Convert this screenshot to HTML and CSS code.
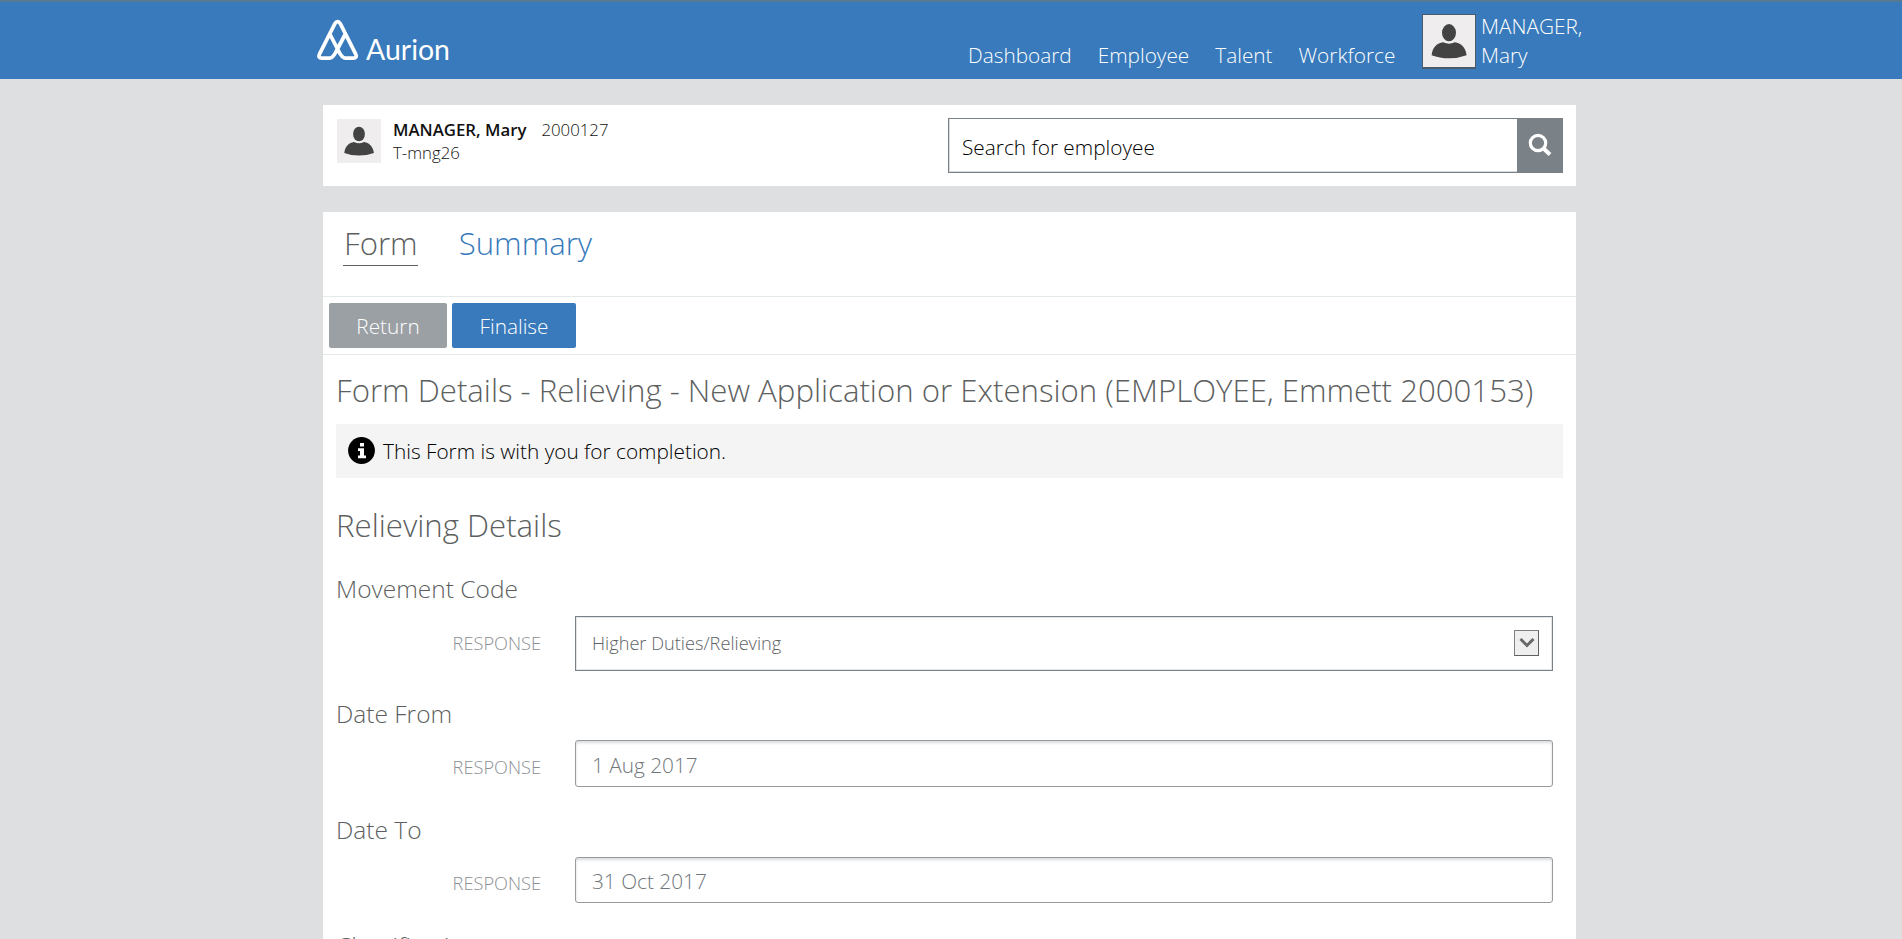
FILE: index.html
```html
<!DOCTYPE html>
<html lang="en">
<head>
<meta charset="utf-8">
<title>Aurion</title>
<link rel="stylesheet" href="styles.css">
</head>
<body>
<header class="topbar">
  <svg class="logo" width="140" height="60" viewBox="0 0 140 60">
    <g fill="none" stroke="#fff" stroke-width="3.800" stroke-linejoin="round" stroke-linecap="round">
      <path d="M14.600 19.500 L22.600 35 Q26 42.200 29.500 42.200 H37 Q41.700 42.200 39.600 37.800 L24.500 8 Q21.600 3.400 18.700 8 L3.600 37.800 Q1.600 42.200 6 42.200 H13.500 Q17 42.200 20.400 35 L28.600 19.500"/>
    </g>
    <text class="logo-text" x="50" y="44" textLength="84" lengthAdjust="spacingAndGlyphs">Aurion</text>
  </svg>
  <nav class="nav">
    <a>Dashboard</a><a>Employee</a><a>Talent</a><a>Workforce</a>
  </nav>
  <div class="user">
    <svg class="user-pic" width="52" height="53" viewBox="0 0 44 44" preserveAspectRatio="none"><rect width="44" height="44" fill="#efedee"/><ellipse cx="22" cy="15" rx="5.900" ry="7.300" fill="#434343"/><path d="M7.300 34 C8 27 12 23.800 17 23 Q22 25.500 27 23 C32 23.800 36 27 36.900 34 Q30 36.600 22 36.600 Q14 36.600 7.300 34Z" fill="#434343"/></svg>
    <span class="user-name">MANAGER,<br>Mary</span>
  </div>
</header>
<main class="page">
  <section class="card person">
    <svg class="person-pic" width="44" height="44" viewBox="0 0 44 44"><rect width="44" height="44" fill="#efedee"/><ellipse cx="22" cy="15" rx="5.900" ry="7.300" fill="#434343"/><path d="M7.300 34 C8 27 12 23.800 17 23 Q22 25.500 27 23 C32 23.800 36 27 36.900 34 Q30 36.600 22 36.600 Q14 36.600 7.300 34Z" fill="#434343"/></svg>
    <div class="person-text"><div><b>MANAGER, Mary</b><span class="person-id">2000127</span></div><div>T-mng26</div></div>
    <div class="search">
      <span class="search-field">Search for employee</span>
      <span class="search-button"><svg width="24" height="24" viewBox="0 0 24 24" fill="none" stroke="#fff"><circle cx="10" cy="10" r="7.700" stroke-width="3.200"/><path d="M15.500 15.500 L22 21.500" stroke-width="4"/></svg></span>
    </div>
  </section>
  <section class="card form">
    <div class="tabs"><span class="tab tab-active">Form</span><span class="tab">Summary</span></div>
    <div class="actions"><span class="button button-return">Return</span><span class="button button-finalise">Finalise</span></div>
    <div class="content">
      <h1 class="title">Form Details - Relieving - New Application or Extension (EMPLOYEE, Emmett 2000153)</h1>
      <div class="notice"><svg width="27" height="27" viewBox="0 0 27 27"><circle cx="13.500" cy="13.500" r="13.400"/><path fill="#fff" d="M12 6h4v3.500h-4zM10 11.200h6v7.300h2v2.800h-8v-2.800h2v-4.500h-2z"/></svg><span>This Form is with you for completion.</span></div>
      <h2 class="section-title">Relieving Details</h2>
      <h3 class="label">Movement Code</h3>
      <div class="row row-select"><span class="response">RESPONSE</span><div class="select"><span>Higher Duties/Relieving</span><span class="arrow"><svg width="16" height="12" viewBox="0 0 16 12"><path d="M1.500 1 L8 7.500 L14.500 1" fill="none" stroke="#686868" stroke-width="3"/></svg></span></div></div>
      <h3 class="label label-from">Date From</h3>
      <div class="row row-from"><span class="response">RESPONSE</span><div class="input">1 Aug 2017</div></div>
      <h3 class="label">Date To</h3>
      <div class="row row-to"><span class="response">RESPONSE</span><div class="input">31 Oct 2017</div></div>
      <h3 class="label">Classification</h3>
    </div>
  </section>
</main>
</body>
</html>
```

FILE: styles.css
```css
* { box-sizing: border-box; }
html, body { height: 100%; overflow: hidden; }
body { margin: 0; background: #dedfe1; font-family: "Open Sans", sans-serif; font-weight: 300; color: #000; }
svg { display: block; flex: none; }
h1, h2, h3 { margin: 0; font-weight: 300; color: #5d5f61; white-space: nowrap; }

.topbar { height: 79px; background: #387abb; border-top: 2px solid #567a96; padding-left: 316px; display: flex; align-items: flex-start; color: #fff; }
.logo { margin-top: 14px; }
.logo-text { font: 400 29.500px Lato, sans-serif; fill: #fff; }
.nav { margin-left: 512px; width: 454px; display: flex; gap: 26px; font-size: 20.800px; line-height: 29px; padding-top: 39px; white-space: nowrap; }
.user { display: flex; font-size: 20.800px; line-height: 29px; padding-top: 12px; }
.user-pic { width: 54px; height: 55px; border: 1px solid #4b5b6c; border-bottom-width: 2px; }
.user-name { margin: -2px 0 0 5px; }

.page { width: 1253px; margin-left: 323px; }
.card { background: #fff; margin-top: 26px; }
.person { height: 81px; display: flex; padding: 13px 13px 0 14px; }
.person-pic { margin-top: 1px; }
.person-text { margin-left: 12px; font-size: 16.800px; line-height: 23px; color: #111; width: 555px; }
.person-text b { font-weight: 600; }
.person-id { margin-left: 15px; }
.search { display: flex; width: 615px; height: 55px; margin-left: auto; }
.search-field { flex: 1; border: 1px solid #7a8187; border-right: 0; box-shadow: inset 1px -1px #d8dadc; padding-left: 13px; font-size: 20.800px; line-height: 57px; }
.search-button { width: 46px; background: #7a8187; display: flex; padding: 15px 0 0 11px; }

.form { height: 760px; }
.tabs { height: 85px; border-bottom: 1px solid #e4eae9; display: flex; gap: 41px; padding: 9px 20px 0; font-size: 31.200px; line-height: 44px; color: #387abb; }
.tab { height: 45px; }
.tab-active { color: #5d5f61; border-bottom: 1px solid #5d5f61; padding-left: 1px; }
.actions { height: 58px; border-bottom: 1px solid #e4eae9; padding: 6px; display: flex; gap: 5px; }
.button { height: 45px; border-radius: 2px; color: #fff; text-align: center; font-size: 20.800px; line-height: 46px; }
.button-return { width: 118px; background: #9ba0a4; }
.button-finalise { width: 124px; background: #387abb; }
.content { padding: 0 13px; }
.title { font-size: 31.200px; line-height: 44px; height: 69px; padding-top: 13px; }
.notice { height: 54px; background: #f4f4f4; display: flex; padding: 13px 0 0 12px; gap: 8px; font-size: 20.800px; line-height: 28px; }
.section-title { font-size: 31.200px; line-height: 44px; height: 93px; padding-top: 25px; }
.label { font-size: 24.500px; line-height: 35px; height: 45px; }
.label-from { line-height: 37px; }
.row { display: flex; }
.row-select { height: 79px; }
.row-from { height: 72px; }
.row-to { height: 71px; }
.response { width: 205px; margin-right: 34px; text-align: right; font-size: 18.200px; line-height: 54px; color: #8b9094; }
.select { width: 978px; height: 55px; border: 1px solid #7a8187; box-shadow: inset 0 0 0 1px #e1e5e5; padding: 0 13px 2px 16px; display: flex; justify-content: space-between; align-items: center; font-size: 18.200px; color: #606366; }
.arrow { width: 25px; height: 26px; background: #efefef; border: 1px solid #808080; border-right-color: #606060; border-bottom-color: #606060; padding: 7px 0 0 4px; }
.input { width: 978px; height: 47px; border: 1px solid #989b9e; border-radius: 3px; box-shadow: inset 0 2px 3px #dadcde; padding-left: 16px; font-size: 20.800px; line-height: 49px; color: #70767b; }
.row-to .response { line-height: 52px; }
.row-to .input { height: 46px; line-height: 47px; }
```
